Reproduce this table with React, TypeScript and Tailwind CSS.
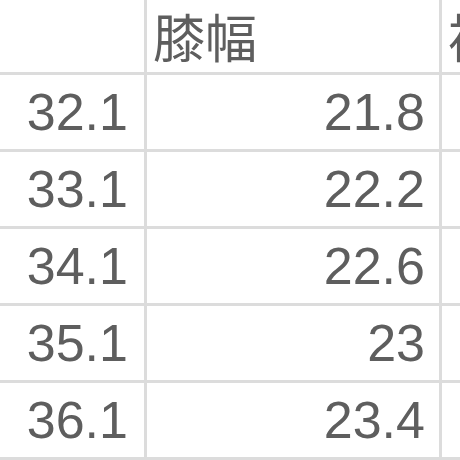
// Size table crop — 膝幅 column

const rows = [
  ["32.1", "21.8", ""],
  ["33.1", "22.2", ""],
  ["34.1", "22.6", ""],
  ["35.1", "23", ""],
  ["36.1", "23.4", ""],
];

export default function App() {
  return (
    <div
      className="w-[460px] h-[460px] overflow-hidden bg-white text-[#5e5e5e]"
      style={{ fontFamily: '"Liberation Sans", "Noto Sans CJK JP", sans-serif' }}
    >
      <div className="grid grid-cols-[147px_295px_120px] w-[562px]">
        <div className="h-[75px] border-r-[3px] border-b-[3px] border-[#dcdcdc]" />
        <div className="h-[75px] border-r-[3px] border-b-[3px] border-[#dcdcdc] pl-[6px] pt-[8px] flex items-center text-[52px] leading-none">
          膝幅
        </div>
        <div className="h-[75px] border-b-[3px] border-[#dcdcdc] pl-[6px] pt-[8px] flex items-center text-[52px] leading-none">
          裄丈
        </div>
        {rows.map((r, i) => (
          <div key={i} className="contents">
            <div className="h-[77px] border-r-[3px] border-b-[3px] border-[#dcdcdc] pr-[16px] flex items-center justify-end text-[52px] leading-none">
              {r[0]}
            </div>
            <div className="h-[77px] border-r-[3px] border-b-[3px] border-[#dcdcdc] pr-[14px] flex items-center justify-end text-[52px] leading-none">
              {r[1]}
            </div>
            <div className="h-[77px] border-b-[3px] border-[#dcdcdc]" />
          </div>
        ))}
      </div>
    </div>
  );
}
